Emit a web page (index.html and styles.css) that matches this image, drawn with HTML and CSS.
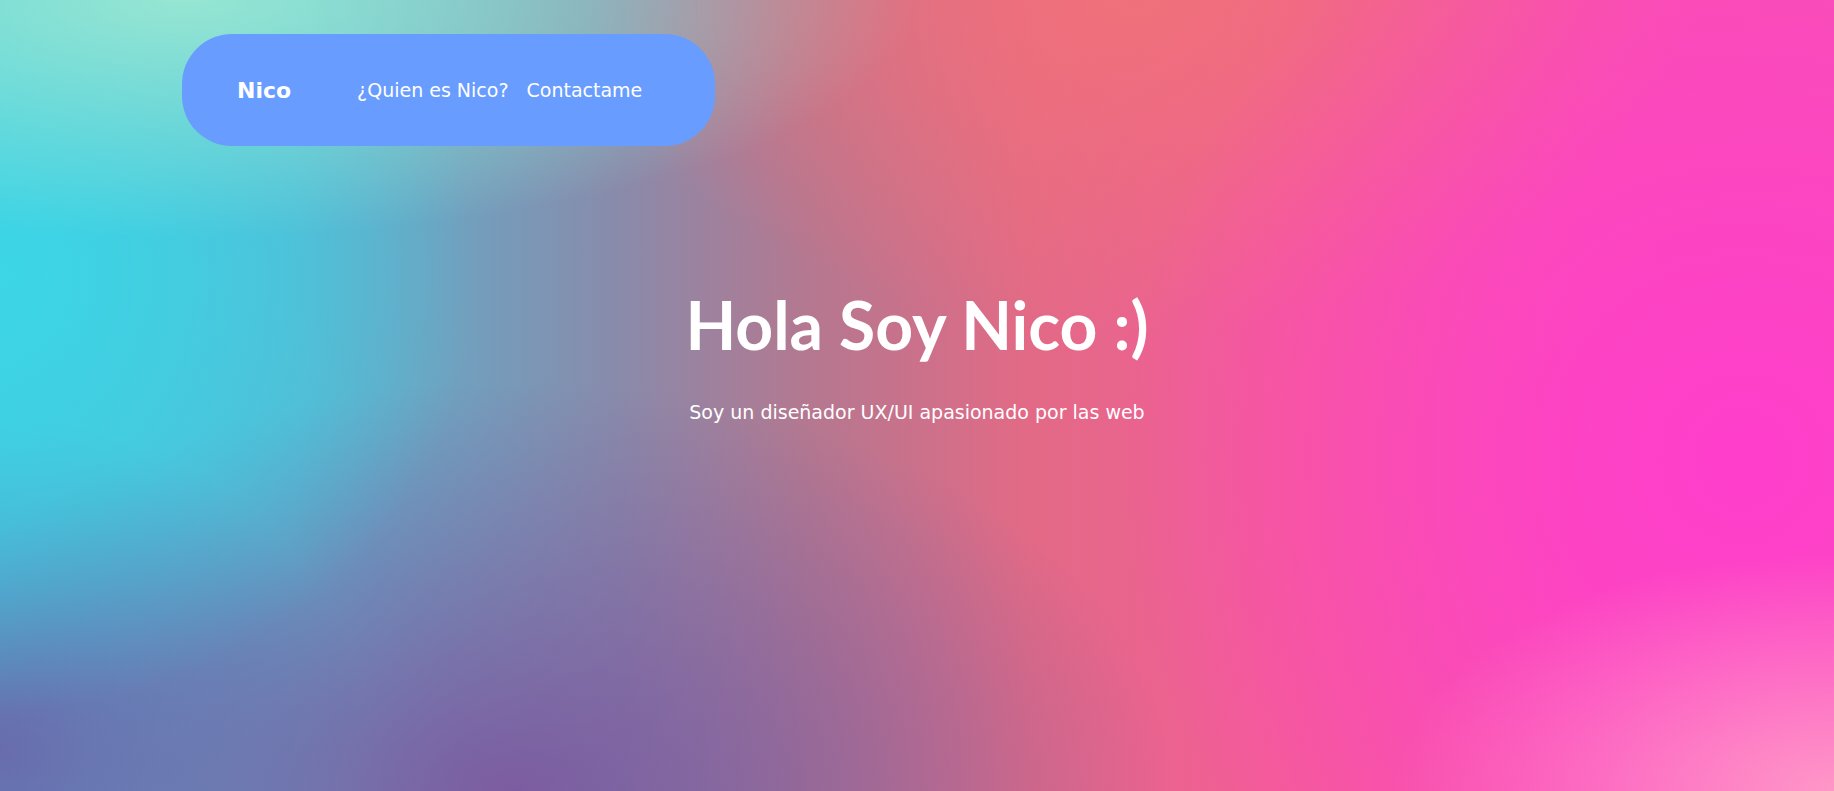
FILE: index.html
```html
<!DOCTYPE html>
<html lang="es">
<head>
<meta charset="utf-8">
<title>Nico</title>
<link rel="stylesheet" href="styles.css">
</head>
<body>
<div class="page">
  <nav class="nav">
    <a class="brand" href="#">Nico</a>
    <ul class="links">
      <li><a href="#">¿Quien es Nico?</a></li>
      <li><a href="#">Contactame</a></li>
    </ul>
  </nav>
  <section class="hero">
    <h1 class="title">Hola Soy Nico :)</h1>
    <p class="subtitle">Soy un diseñador UX/UI apasionado por las web</p>
  </section>
</div>
</body>
</html>
```

FILE: styles.css
```css
html, body {
  margin: 0;
  padding: 0;
  height: 100%;
}
body {
  font-family: "DejaVu Sans", "Open Sans", sans-serif;
  color: #fff;
  background-color: #e46a8e;
  background-image:
    radial-gradient(ellipse 24% 30% at 100% 100%, rgba(255,155,200,0.95), rgba(255,155,200,0) 100%),
    radial-gradient(ellipse 40% 30% at 10% 0%, rgba(150,230,210,1), rgba(150,230,210,0) 100%),
    radial-gradient(ellipse 26% 55% at 0% 35%, rgba(60,214,230,1), rgba(60,214,230,0) 100%),
    radial-gradient(ellipse 36% 52% at 28% 100%, rgba(124,92,160,1), rgba(124,92,160,0) 100%),
    radial-gradient(ellipse 20% 42% at 0% 95%, rgba(100,112,176,1), rgba(100,112,176,0) 100%),
    radial-gradient(ellipse 34% 80% at 95% 58%, rgba(255,62,204,1), rgba(255,62,204,0) 100%),
    radial-gradient(ellipse 30% 42% at 62% 0%, rgba(240,112,122,1), rgba(240,112,122,0) 100%),
    linear-gradient(90deg, #44c6de 0%, #58b6d2 16%, #8a8aaa 34%, #b47890 44%, #e26a86 56%, #f45c98 70%, #f950b0 86%, #f850b4 100%);
}
.page {
  min-height: 100%;
  display: flex;
  flex-direction: column;
}
.nav {
  margin: 34px 0 0 182px;
  width: 533px;
  height: 112px;
  box-sizing: border-box;
  padding: 0 0 0 55px;
  display: flex;
  align-items: center;
  background: #699cff;
  border-radius: 50px;
}
.brand {
  font-weight: 700;
  font-size: 22px;
  color: #fff;
  text-decoration: none;
}
.links {
  list-style: none;
  margin: 0 0 0 66px;
  padding: 0;
  display: flex;
  gap: 18px;
}
.links a {
  color: #fff;
  text-decoration: none;
  font-size: 19px;
}
.hero {
  text-align: center;
  margin-top: 140px;
}
.title {
  margin: 0;
  font-family: "Lato", "Open Sans", sans-serif;
  font-weight: 700;
  font-size: 66px;
  line-height: 77px;
}
.subtitle {
  margin: 34px 0 0;
  font-size: 19px;
  line-height: 30px;
}
```
